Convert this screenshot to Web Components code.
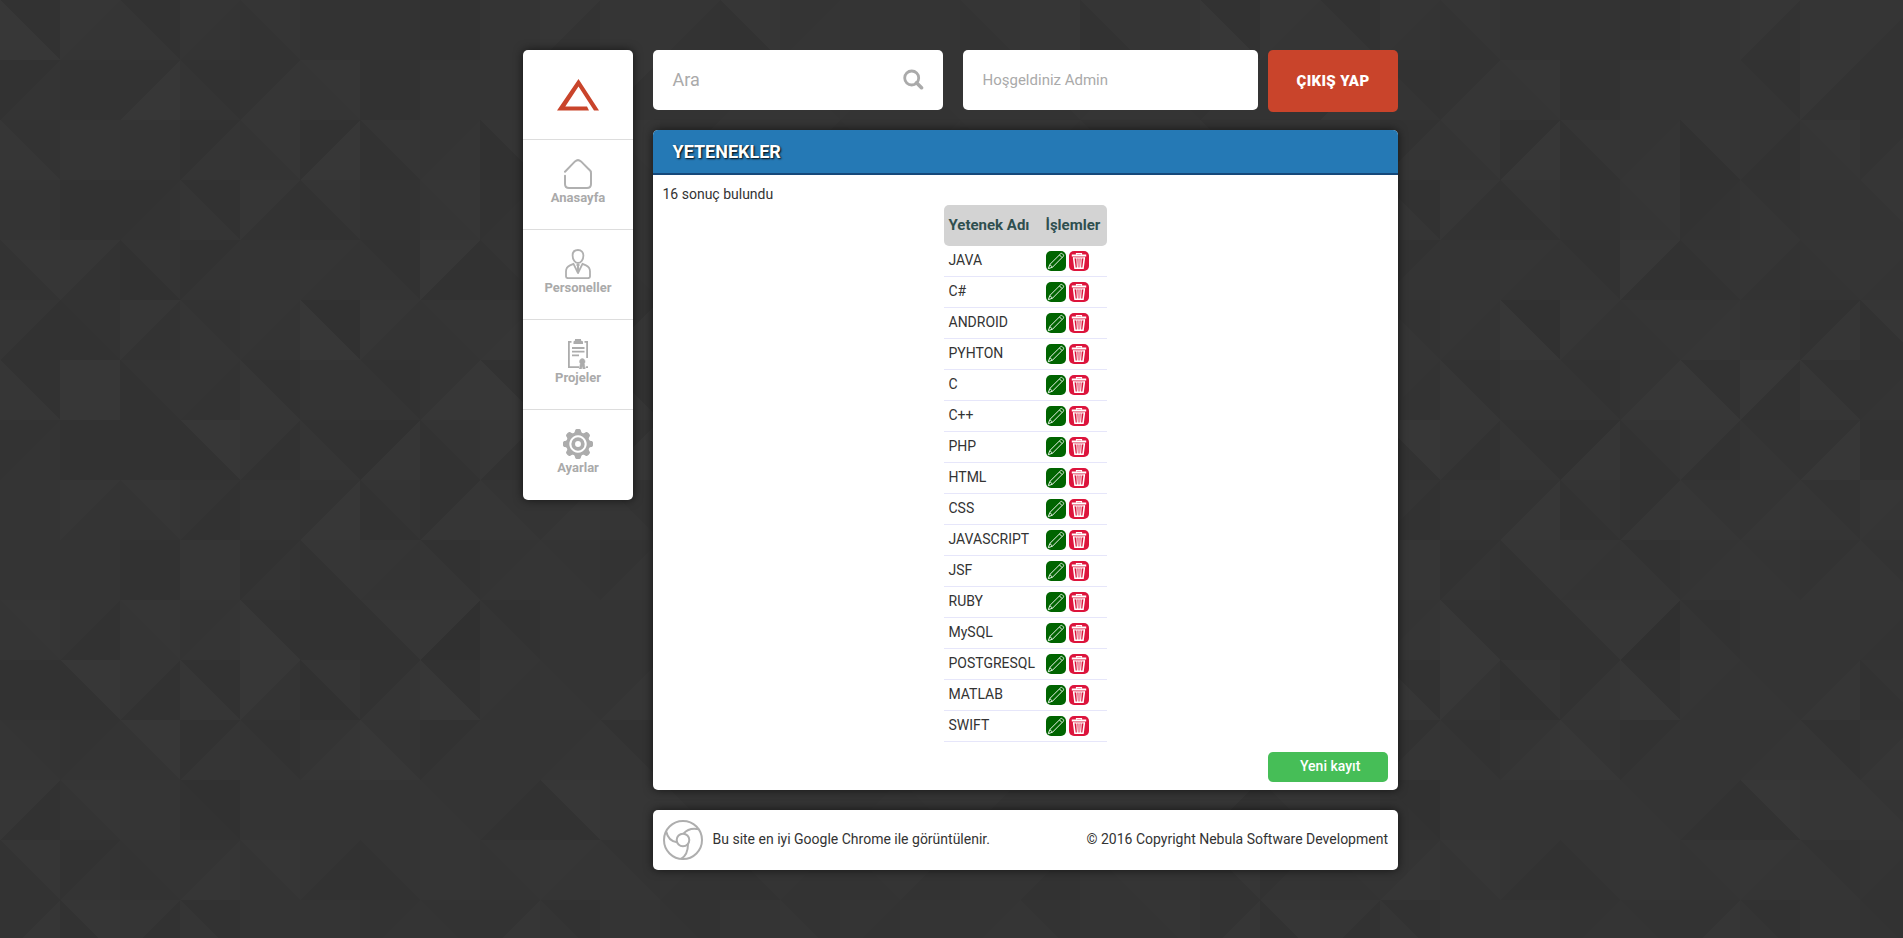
<!DOCTYPE html>
<html lang="tr">
<head>
<meta charset="utf-8">
<title>Yetenekler</title>
<style>
html, body { margin: 0; height: 100%; overflow: hidden; background: #343434; }
body { font-family: Roboto, "Liberation Sans", sans-serif; font-size: 14px; color: #333; }
</style>
</head>
<body>
<admin-page></admin-page>
<script>
const define = (name, html, setup) => {
  const tpl = document.createElement('template');
  tpl.innerHTML = html;
  customElements.define(name, class extends HTMLElement {
    connectedCallback() {
      if (this.shadowRoot) return;
      this.attachShadow({ mode: 'open' }).append(tpl.content.cloneNode(true));
      if (setup) setup(this.shadowRoot, this);
    }
  });
};

/* Triangle mosaic: each pair is the upper and lower shade of one 60px cell. */
const MOSAIC = [
  '27 65 25 54 53 33 33 22 44 63 55 53 62 45 44 44 53 66 52 55',
  '24 33 37 24 36 65 22 44 44 24 63 33 45 34 54 43 44 53 45 34',
  '36 55 44 25 64 27 52 45 51 42 65 35 44 53 43 45 43 54 35 44',
  '44 22 23 25 63 52 33 65 23 35 44 64 44 44 44 44 44 44 44 44',
  '63 63 41 24 44 54 24 72 42 53 54 54 44 44 44 44 44 44 44 44',
  '52 32 63 35 54 17 64 54 56 44 26 62 44 44 44 44 44 44 44 44',
  '26 77 42 43 26 44 24 47 27 72 26 34 44 44 44 44 44 44 44 44',
  '34 22 22 72 52 25 16 42 62 35 37 22 44 44 44 44 44 44 44 44',
  '44 64 64 42 44 37 42 26 46 46 35 65 44 44 44 44 44 44 44 44',
  '44 44 22 66 24 62 54 25 45 45 35 35 44 44 44 44 44 44 44 44',
  '65 42 65 45 27 22 62 60 24 44 44 43 44 44 44 44 44 44 44 44',
  '22 72 52 26 74 51 25 27 54 45 46 42 44 44 44 44 44 44 44 44',
  '45 34 74 25 24 46 47 24 44 45 25 46 44 44 44 44 44 44 44 44',
  '62 64 55 12 44 44 44 45 42 72 66 46 33 44 34 43 53 44 55 44',
  '63 24 43 46 64 42 42 55 54 65 35 43 42 43 43 53 44 42 54 44',
  '36 62 52 25 44 44 34 34 36 24 44 23 44 35 43 44 45 35 44 54'
];
define('mosaic-backdrop', `<style>
:host { display: block; width: 1903px; height: 938px; }
svg { display: block; }
</style><svg width="1903" height="938" shape-rendering="crispEdges"></svg>`, root => {
  let out = '';
  MOSAIC.forEach((line, r) => {
    const cells = line.split(' ');
    for (let c = 0; c < 32; c++) {
      const v = cells[c % 20], x = c * 60, y = r * 60, X = x + 60, Y = y + 60;
      const shade = n => '#' + ('3' + n).repeat(3);
      const down = (r + c) % 2 === 0;
      const upper = down ? `M${x} ${y}H${X}V${Y}Z` : `M${x} ${y}H${X}L${x} ${Y}Z`;
      out += `<path d="M${x} ${y}H${X}V${Y}H${x}Z" fill="${shade(v[1])}"/><path d="${upper}" fill="${shade(v[0])}"/>`;
    }
  });
  root.querySelector('svg').innerHTML = out;
});

const ICONS = {
  logo: `<svg width="42" height="32" viewBox="0 0 42 32" fill="#c9442b"><path fill-rule="evenodd" d="M21.500 0L42 31.500H37L21.500 7.500L8.300 27.500H30L32 31.500H0Z"/></svg>`,
  home: `<svg width="30" height="30" viewBox="0 0 30 30" fill="none" stroke="#b0b0b0" stroke-width="2" stroke-linecap="round"><path d="M2 12.7L12 2.4Q15 -.2 18 2.4L26 10.4Q28 12 28 14V25Q28 29 24 29H6Q2 29 2 25V16.8"/></svg>`,
  people: `<svg width="30" height="30" viewBox="0 0 30 30" fill="none" stroke="#b0b0b0" stroke-width="1.8" stroke-linejoin="round"><path d="M15 1C11.500 1 9.600 3.400 9.600 6.500C9.600 10.500 12 14 15 14S20.400 10.500 20.400 6.500C20.400 3.400 18.500 1 15 1ZM10.500 14.800L7 16.300Q3 18 3 22.500V27.500Q3 29 5 29.200H25Q27 29 27 27.500V22.500Q27 18 23 16.300L19.500 14.800L15 24Z"/><path d="M13.500 16H16.500M15 16V22" stroke-width="2"/></svg>`,
  projects: `<svg width="30" height="30" viewBox="0 0 30 30" fill="#acacac"><path d="M8.500 2H5V29H16V27.200H6.800V3.800H8.500ZM21.500 2H25V19H23.200V3.800H21.500ZM23.200 27.200H25V29H22.500ZM10.500 5V2.500L12 1.500V0H18V1.500L20 2.500V5ZM9 8H21.500V10H9ZM9 11.800H21.500V13.600H9ZM9 15.500H16V17.300H9Z"/><path d="M19.300 19.500a3 3 0 0 1 2 5L22.200 30H20L19.300 27L18.500 30H16.300L17.300 24.500a3 3 0 0 1 2-5Z" stroke="#acacac" stroke-width=".5"/></svg>`,
  gear: `<svg width="30" height="30" viewBox="0 0 30 30" fill="none" stroke="#acacac"></svg>`,
  search: `<svg width="21" height="21" viewBox="0 0 21 21" fill="none" stroke="#aaa"><circle cx="8.700" cy="9" r="7" stroke-width="2.800"/><path d="M13.500 13.800L18.500 18.700" stroke-width="3.600" stroke-linecap="round"/></svg>`,
  chrome: `<svg width="40" height="40" viewBox="0 0 40 40" fill="none" stroke="#aeaeae" stroke-width="2"><circle cx="20" cy="20" r="19"/><circle cx="20" cy="20" r="6.300"/><path d="M20.500 13.700C24 9.500 29.500 7.800 36 9.200M3.300 11.800C4.500 17.500 8.500 21.500 14 22.200M25 23.800C25 31 22.500 36.500 18 38.800"/></svg>`,
  edit: `<svg width="20" height="20" viewBox="0 0 20 20" fill="none" stroke="#e8f2e8" stroke-width="1" stroke-linejoin="round"><path d="M2.300 17.700L3.800 13.500L14.700 2.700Q15.500 2 16.400 2.800L17.200 3.600Q18 4.500 17.300 5.300L6.500 16.200ZM3.800 13.500L6.500 16.200M13.500 4L16 6.500"/></svg>`,
  trash: `<svg width="20" height="20" viewBox="0 0 20 20" fill="none" stroke="#fff"><path d="M2.800 4.500H17.200" stroke-width="2"/><path d="M7.500 3.800V2.600H12.500V3.800" stroke-width="1.200"/><path d="M4.600 6.500L6 17.300H14L15.400 6.500" stroke-width="1.600"/><path d="M4 6.900H16" stroke-width="1.100"/><path d="M7.800 7L8.400 17M10 7V17M12.200 7L11.600 17" stroke-width="1.100"/></svg>`
};
{
  /* Cog outline: eight rounded teeth around a ring. */
  let d = '';
  const n = 240;
  for (let i = 0; i < n; i++) {
    const a = i / n * Math.PI * 2;
    const k = Math.tanh(Math.cos(a * 8) * 2 + .5);
    const r = 13.400 + k * 1.700;
    d += (i ? 'L' : 'M') + (15 + r * Math.cos(a)).toFixed(2) + ' ' + (15 + r * Math.sin(a)).toFixed(2);
  }
  ICONS.gear = ICONS.gear.replace('></svg>', `><path fill="#acacac" stroke="none" fill-rule="evenodd" d="${d}ZM15 6.300a8.700 8.700 0 1 0 .01 0Z"/><circle cx="15" cy="15" r="4.800" stroke-width="3.700"/></svg>`);
}
define('ui-icon', `<style>:host { display: block; line-height: 0; } svg { display: block; }</style><span></span>`, (root, host) => {
  root.querySelector('span').innerHTML = ICONS[host.getAttribute('name')];
});

define('nav-item', `<style>
:host { display: flex; flex-direction: column; align-items: center; box-sizing: border-box; height: 90px; padding-top: 19px; border-bottom: 1px solid #ddd; color: #aaa; font-size: 13px; font-weight: 700; line-height: 17px; }
:host([brand]) { padding-top: 29px; }
:host(:last-child) { border-bottom: 0; }
</style><slot name="icon"></slot><slot></slot>`);

define('side-nav', `<style>
:host { display: block; width: 110px; height: 450px; background: #fff; border-radius: 5px; box-shadow: 0 0 10px rgba(0,0,0,.6); }
</style>
<nav-item brand><ui-icon slot="icon" name="logo"></ui-icon></nav-item>
<nav-item><ui-icon slot="icon" name="home"></ui-icon>Anasayfa</nav-item>
<nav-item><ui-icon slot="icon" name="people"></ui-icon>Personeller</nav-item>
<nav-item><ui-icon slot="icon" name="projects"></ui-icon>Projeler</nav-item>
<nav-item><ui-icon slot="icon" name="gear"></ui-icon>Ayarlar</nav-item>`);

define('top-bar', `<style>
:host { display: flex; align-items: flex-start; height: 80px; }
.box { box-sizing: border-box; height: 60px; background: #fff; border-radius: 5px; color: #aaa; display: flex; align-items: center; justify-content: space-between; padding: 0 19.5px; }
.search { width: 290px; font-size: 18px; line-height: 23px; padding-bottom: 1px; margin-right: 20px; }
.hello { width: 295px; font-size: 15px; margin-right: 10px; }
.exit { width: 130px; height: 62px; border-radius: 5px; background: #c9442b; color: #fff; font-size: 15px; font-weight: 900; letter-spacing: .35px; display: flex; align-items: center; justify-content: center; }
</style>
<div class="box search"><span>Ara</span><ui-icon name="search"></ui-icon></div>
<div class="box hello"><span>Hoşgeldiniz Admin</span></div>
<div class="exit"><span>ÇIKIŞ YAP</span></div>`);

define('skill-row', `<style>
:host { display: grid; grid-template-columns: 98px 1fr; box-sizing: border-box; height: 31px; border-bottom: 1px solid #e6e6fa; }
.name { padding-left: 4.5px; line-height: 29px; }
.acts { display: flex; gap: 3px; padding: 5px 0 0 4px; }
.act { width: 20px; height: 20px; border-radius: 5px; }
.edit { background: #006400; } .del { background: #dc143c; }
</style>
<div class="name"><slot></slot></div>
<div class="acts"><div class="act edit"><ui-icon name="edit"></ui-icon></div><div class="act del"><ui-icon name="trash"></ui-icon></div></div>`);

define('skill-table', `<style>
:host { display: block; width: 163px; margin: 0 auto; }
.head { display: grid; grid-template-columns: 98px 1fr; height: 41px; border-radius: 5px; background: #d3d3d3; color: #2f4f4f; font-weight: 700; font-size: 15px; line-height: 40px; }
.head span { padding-left: 3.5px; white-space: nowrap; }
.head span:first-child { padding-left: 4.5px; }
</style>
<div class="head"><span>Yetenek Adı</span><span>İşlemler</span></div><div class="rows"></div>`, root => {
  const rows = root.querySelector('.rows');
  for (const s of ['JAVA', 'C#', 'ANDROID', 'PYHTON', 'C', 'C++', 'PHP', 'HTML', 'CSS', 'JAVASCRIPT', 'JSF', 'RUBY', 'MySQL', 'POSTGRESQL', 'MATLAB', 'SWIFT']) {
    const row = document.createElement('skill-row');
    row.textContent = s;
    rows.append(row);
  }
});

define('skills-panel', `<style>
:host { display: block; box-sizing: border-box; height: 660px; background: #fff; border-radius: 5px; box-shadow: 0 0 10px rgba(0,0,0,.6); }
h1 { margin: 0; box-sizing: border-box; height: 45px; padding-left: 19.5px; background: #2579b5; border-bottom: 2px solid #15487a; border-radius: 5px 5px 0 0; color: #fff; font-size: 18px; font-weight: 700; line-height: 43px; text-shadow: 1px 1px 2px #000; }
.count { height: 21px; line-height: 20px; padding: 9px 0 0 9.5px; }
.foot { display: flex; justify-content: flex-end; padding: 10px 10px 0; }
.new { box-sizing: border-box; width: 120px; height: 30px; padding-left: 32px; border-radius: 5px; background: #46be57; color: #fff; font-weight: 500; line-height: 29px; }
</style>
<h1>YETENEKLER</h1><div class="count">16 sonuç bulundu</div><skill-table></skill-table>
<div class="foot"><div class="new">Yeni kayıt</div></div>`);

define('page-footer', `<style>
:host { display: flex; align-items: center; box-sizing: border-box; height: 60px; padding: 0 10px; margin-top: 20px; background: #fff; border-radius: 5px; box-shadow: 0 0 10px rgba(0,0,0,.6); }
span { padding-bottom: 2px; }
.note { margin-left: 9.5px; flex: 1; }
</style><ui-icon name="chrome"></ui-icon><span class="note">Bu site en iyi Google Chrome ile görüntülenir.</span><span>© 2016 Copyright Nebula Software Development</span>`);

define('admin-page', `<style>
:host { display: grid; width: 1903px; height: 938px; overflow: hidden; }
mosaic-backdrop, .layout { grid-area: 1 / 1; }
.layout { display: flex; gap: 20px; align-items: flex-start; padding: 50px 0 0 523px; z-index: 1; }
main { width: 745px; }
</style>
<mosaic-backdrop></mosaic-backdrop>
<div class="layout"><side-nav></side-nav><main><top-bar></top-bar><skills-panel></skills-panel><page-footer></page-footer></main></div>`);
</script>
</body>
</html>
